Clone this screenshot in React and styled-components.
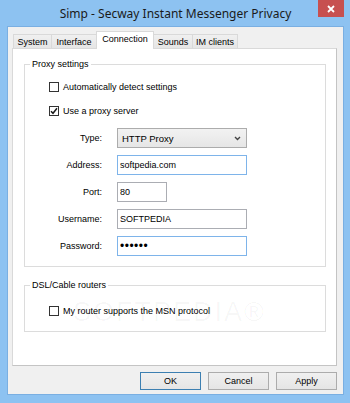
import React from "react";
import styled, { createGlobalStyle } from "styled-components";

const GlobalStyle = createGlobalStyle`
  html, body {
    margin: 0;
    padding: 0;
  }
  body {
    font-family: "Liberation Sans", Arial, sans-serif;
    font-size: 9px;
    color: #000;
  }
`;

const Window = styled.div`
  width: 350px;
  height: 403px;
  box-sizing: border-box;
  background: #8dc2f1;
  padding: 0 7px 9px 8px;
  display: flex;
  flex-direction: column;
`;

const TitleBar = styled.div`
  height: 27px;
  display: grid;
  grid-template-columns: 30px 1fr 30px;
  align-items: start;
`;

const Title = styled.div`
  grid-column: 2;
  text-align: center;
  font-family: "Noto Sans", "Open Sans", sans-serif;
  font-size: 12px;
  line-height: 27px;
  color: #1a1a1a;
  white-space: nowrap;
`;

const CloseButton = styled.div`
  grid-column: 3;
  justify-self: end;
  margin-right: -1px;
  width: 26px;
  height: 17px;
  background: #c75050;
  display: flex;
  align-items: center;
  justify-content: center;
`;

const Client = styled.div`
  flex: 1;
  background: #f0f0f0;
  box-shadow: 0 0 0 1px #7aafe2;
  padding: 4px 6px 4px 4px;
  display: flex;
  flex-direction: column;
  min-height: 0;
`;

const TabRow = styled.div`
  height: 17px;
  display: flex;
  align-items: flex-end;
  padding-left: 1px;
`;

const Tab = styled.div`
  box-sizing: border-box;
  width: ${(p) => p.$w}px;
  height: ${(p) => (p.$active ? 18 : 14)}px;
  margin-bottom: ${(p) => (p.$active ? -1 : 0)}px;
  margin-left: ${(p) => (p.$first ? 0 : -1)}px;
  position: relative;
  z-index: ${(p) => (p.$active ? 2 : 1)};
  border: 1px solid #d9d9d9;
  border-bottom: none;
  background: ${(p) =>
    p.$active ? "#ffffff" : "linear-gradient(#f0f0f0, #e5e5e5)"};
  display: flex;
  align-items: center;
  justify-content: center;
  padding-bottom: ${(p) => (p.$active ? 3 : 0)}px;
  white-space: nowrap;
`;

const Panel = styled.div`
  flex: 1;
  background: #fff;
  border: 1px solid #d9d9d9;
  border-right-color: #c4c4c4;
  border-bottom-color: #c4c4c4;
  padding: 10px 10px 0 11px;
  display: flex;
  flex-direction: column;
`;

const Group = styled.fieldset`
  position: relative;
  margin: ${(p) => p.$top || 0}px 0 0 0;
  padding: 0 0 ${(p) => p.$bottom}px 0;
  border: 1px solid #dcdcdc;
  min-inline-size: 0;
`;

const Legend = styled.legend`
  margin-left: 5px;
  padding: 0 2px;
  line-height: 11px;
`;

const CheckRow = styled.div`
  height: 14px;
  margin-top: ${(p) => p.$top}px;
  padding-left: 24px;
  display: flex;
  align-items: center;
  gap: 4px;
  position: relative;
  z-index: 1;
`;

const Box = styled.span`
  box-sizing: border-box;
  width: 10px;
  height: 10px;
  border: 1px solid #333;
  background: #fff;
  display: flex;
  align-items: center;
  justify-content: center;
`;

const Form = styled.div`
  margin-top: 10px;
  display: grid;
  grid-template-columns: 77px 1fr;
  grid-auto-rows: 20px;
  column-gap: 15px;
  row-gap: 7px;
  align-items: center;
`;

const Label = styled.div`
  text-align: right;
`;

const Field = styled.input`
  box-sizing: border-box;
  width: ${(p) => p.$w}px;
  height: 20px;
  margin: 0;
  padding: 0 2px;
  border: 1px solid ${(p) => (p.$focus ? "#7eb4ea" : "#abadb3")};
  background: #fff;
  font-family: "Liberation Sans", Arial, sans-serif;
  font-size: ${(p) => p.$size || 9}px;
  letter-spacing: ${(p) => (p.$size ? 0.5 : 0)}px;
  color: #000;
  outline: none;
`;

const Select = styled.div`
  box-sizing: border-box;
  width: 130px;
  height: 20px;
  border: 1px solid #acacac;
  background: linear-gradient(#f2f2f2, #e6e6e6);
  display: flex;
  align-items: center;
  justify-content: space-between;
  padding: 0 5px 0 4px;
  font-size: 9.5px;
`;

const Watermark = styled.div`
  position: absolute;
  left: 48px;
  top: 6px;
  font-family: "Liberation Sans", Arial, sans-serif;
  font-size: 27px;
  letter-spacing: 2px;
  color: rgba(0, 0, 0, 0.035);
  pointer-events: none;
  white-space: nowrap;
`;

const ButtonRow = styled.div`
  margin-top: 6px;
  display: flex;
  justify-content: flex-end;
  gap: 7px;
`;

const Button = styled.div`
  box-sizing: border-box;
  width: 61px;
  height: 18px;
  border: 1px solid ${(p) => (p.$default ? "#3c7fb1" : "#acacac")};
  background: linear-gradient(#f0f0f0, #e5e5e5);
  display: flex;
  align-items: center;
  justify-content: center;
`;

function Check({ checked }) {
  return (
    <Box>
      {checked && (
        <svg width="8" height="8" viewBox="0 0 8 8">
          <path
            d="M1 4.2 L3 6.3 L7 1.3"
            fill="none"
            stroke="#1a1a1a"
            strokeWidth="1.5"
          />
        </svg>
      )}
    </Box>
  );
}

const tabs = [
  { name: "System", w: 39 },
  { name: "Interface", w: 46 },
  { name: "Connection", w: 58 },
  { name: "Sounds", w: 40 },
  { name: "IM clients", w: 46 },
];

export default function App() {
  return (
    <>
      <GlobalStyle />
      <Window>
        <TitleBar>
          <Title>Simp - Secway Instant Messenger Privacy</Title>
          <CloseButton>
            <svg width="8" height="8" viewBox="0 0 8 8">
              <path
                d="M1 1 L7 7 M7 1 L1 7"
                stroke="#fff"
                strokeWidth="1.8"
              />
            </svg>
          </CloseButton>
        </TitleBar>
        <Client>
          <TabRow>
            {tabs.map((t, i) => (
              <Tab
                key={t.name}
                $w={t.w}
                $first={i === 0}
                $active={t.name === "Connection"}
              >
                {t.name}
              </Tab>
            ))}
          </TabRow>
          <Panel>
            <Group $bottom={10}>
              <Legend>Proxy settings</Legend>
              <CheckRow $top={10}>
                <Check />
                Automatically detect settings
              </CheckRow>
              <CheckRow $top={10}>
                <Check checked />
                Use a proxy server
              </CheckRow>
              <Form>
                <Label>Type:</Label>
                <Select>
                  HTTP Proxy
                  <svg width="7" height="5" viewBox="0 0 7 5">
                    <path
                      d="M1 1 L3.5 3.5 L6 1"
                      fill="none"
                      stroke="#444"
                      strokeWidth="1.4"
                    />
                  </svg>
                </Select>
                <Label>Address:</Label>
                <Field $w={130} $focus readOnly value="softpedia.com" />
                <Label>Port:</Label>
                <Field $w={50} readOnly value="80" />
                <Label>Username:</Label>
                <Field $w={130} readOnly value="SOFTPEDIA" />
                <Label>Password:</Label>
                <Field
                  $w={130}
                  $focus
                  $size={12}
                  type="password"
                  readOnly
                  value="secret"
                />
              </Form>
            </Group>
            <Group $top={13} $bottom={13}>
              <Legend>DSL/Cable routers</Legend>
              <Watermark>SOFTPEDIA®</Watermark>
              <CheckRow $top={13}>
                <Check />
                My router supports the MSN protocol
              </CheckRow>
            </Group>
          </Panel>
          <ButtonRow>
            <Button $default>OK</Button>
            <Button>Cancel</Button>
            <Button>Apply</Button>
          </ButtonRow>
        </Client>
      </Window>
    </>
  );
}
